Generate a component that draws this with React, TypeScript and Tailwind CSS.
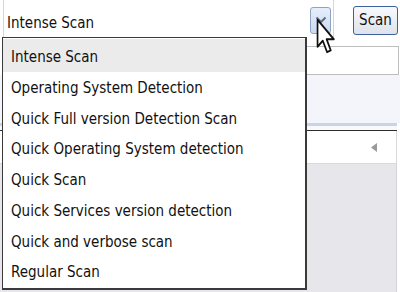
import React from 'react';

const profiles = [
  'Intense Scan',
  'Operating System Detection',
  'Quick Full version Detection Scan',
  'Quick Operating System detection',
  'Quick Scan',
  'Quick Services version detection',
  'Quick and verbose scan',
  'Regular Scan',
];

function Pointer() {
  return (
    <svg
      viewBox="0 0 13 20"
      preserveAspectRatio="none"
      className="absolute left-[316px] top-[18px] w-[20px] h-[36px]"
    >
      <path
        d="M1 1 L1 16 L4.4 12.6 L7.2 19 L9.6 18 L6.9 11.8 L11.6 11.8 Z"
        fill="#fff"
        stroke="#111"
        strokeWidth="1.1"
        strokeLinejoin="round"
      />
    </svg>
  );
}

export default function App() {
  const selected = 'Intense Scan';

  return (
    <div
      className="relative w-[400px] h-[292px] overflow-hidden bg-white flex flex-col text-[15px] text-[#111]"
      style={{ fontFamily: '"DejaVu Sans Condensed", "DejaVu Sans", sans-serif', fontStretch: 'condensed' }}
    >
      {/* profile row */}
      <div className="h-[37px] flex shrink-0">
        <div className="ml-[3px] w-[331px] flex border-l border-r border-[#d6d6d6]">
          <div className="flex-1 pl-[3px] pt-[13px] leading-[20px]">Intense Scan</div>
          <button className="mt-[7px] mr-[2px] w-[21px] h-[27px] rounded-[3px] border border-[#8fa3c2] bg-gradient-to-b from-[#e6eefa] to-[#cbdaf0] flex justify-center">
            <svg width="12" height="8" viewBox="0 0 12 8" className="mt-[8px]">
              <path d="M1.5 1.5 L6 6 L10.5 1.5" fill="none" stroke="#5d6d86" strokeWidth="2" />
            </svg>
          </button>
        </div>
        <button className="ml-[19px] mt-[6px] w-[45px] h-[29px] rounded-[3px] border border-[#3e609c] bg-gradient-to-b from-[#f8f9fc] to-[#dde3ec] leading-[27px] text-center">
          Scan
        </button>
      </div>

      <div className="h-[9px] shrink-0" />

      {/* target field */}
      <div className="h-[29px] ml-[3px] mr-[1px] border border-[#bdbdbd] bg-white shrink-0" />

      <div className="h-[48px] bg-[#f4f5fa] shrink-0" />

      {/* results panel */}
      <div className="flex-1 flex flex-col bg-[#f8f9fb] mr-[3px]">
        <div className="h-[3px] bg-[#c8d5e8]" />
        <div className="h-[4px]" />
        <div className="h-[1px] bg-[#2e2e2e]" />
        <div className="h-[33px] bg-white border-r border-b border-[#d9d9d9] flex items-center justify-end pr-[19px]">
          <svg width="6" height="9" viewBox="0 0 6 9">
            <path d="M6 0 L0 4.5 L6 9 Z" fill="#9a9a9a" />
          </svg>
        </div>
        <div className="flex-1 bg-[#e7e6eb] border-r border-[#d4d4d8]" />
      </div>

      {/* open dropdown list */}
      <div className="absolute left-[2px] top-[37px] w-[305px] h-[253px] bg-white border-t border-l border-r-2 border-b-2 border-[#3a3a3a] pt-[1px]">
        {profiles.map((p, i) => (
          <div
            key={p}
            className={`flex items-center pl-[8px] whitespace-nowrap ${
              i === 0 ? 'h-[33px] pt-[4px]' : 'h-[30.7px] pt-[2px]'
            } ${p === selected ? 'bg-[#ebebeb]' : ''}`}
          >
            {p}
          </div>
        ))}
      </div>

      <Pointer />
    </div>
  );
}
